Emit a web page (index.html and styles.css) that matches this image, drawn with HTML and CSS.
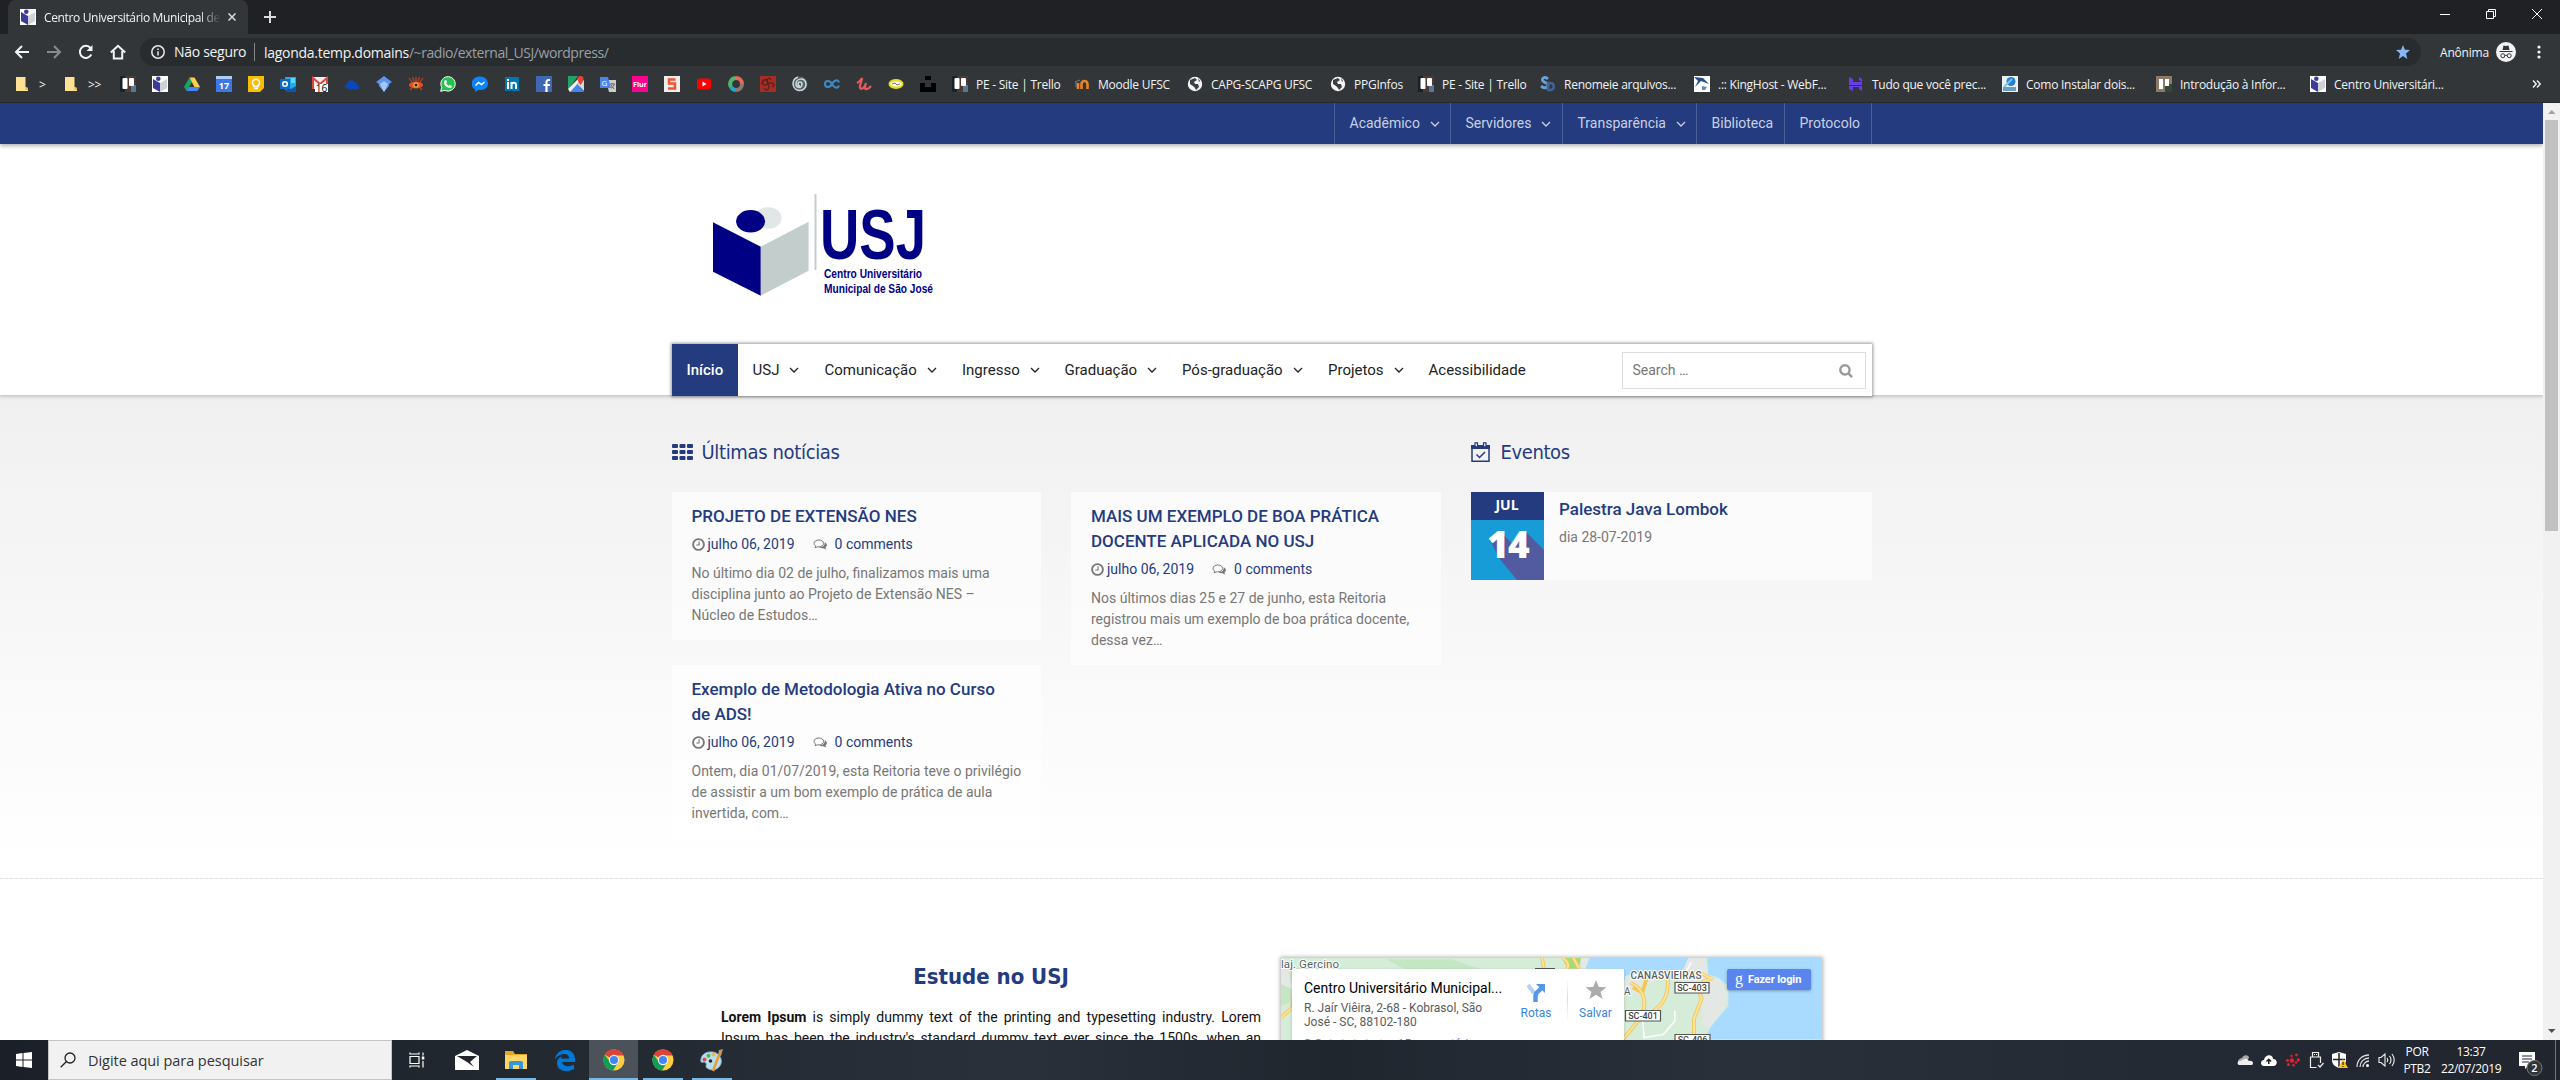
FILE: index.html
```html
<!DOCTYPE html>
<html lang="pt-BR">
<head>
<meta charset="utf-8">
<title>Centro Universitário Municipal de São José</title>
<link rel="stylesheet" href="styles.css">
</head>
<body>
<svg class="defs" width="0" height="0">
  <symbol id="usj" viewBox="0 0 16 16"><path fill="#fff" d="M0 0h16v16H0z"/><path fill="#3b3b98" d="M1 3l7 4v9l-7-4z"/><path fill="#d0d2d6" d="M15 3L8 7v9l7-4z"/><circle cx="6.300" cy="2.700" r="2.300" fill="#3b3b98"/></symbol>
  <symbol id="folder" viewBox="0 0 16 16"><path fill="#fde293" d="M2 1h9.500v10l2.500 1v3H2z"/><path fill="#e8c04f" d="M11.500 11l2.500 1v2h-2.500z"/></symbol>
  <symbol id="trello" viewBox="0 0 16 16"><path fill="#4b3a33" d="M0 0h16v16H0z"/><path fill="#17222b" d="M0 0h5v16H0z"/><path fill="#577897" d="M11 9h5v7h-5z"/><rect x="2.500" y="2" width="5" height="11" rx="1" fill="#fff"/><rect x="9" y="2" width="5" height="8" rx="1" fill="#fff"/></symbol>
  <symbol id="globe" viewBox="0 0 16 16"><circle cx="8" cy="8" r="7.200" fill="#f5f5f5"/><path fill="#3c4043" d="M3 4l5-2 2 2-3 2 1 2 3 0 1 3-3 3-1-2-2-2-3-2zM11 2l2 3-1 1z"/></symbol>
  <symbol id="chrome" viewBox="0 0 24 24"><circle cx="12" cy="12" r="11.500" fill="#ffcd40"/><path fill="#db4437" d="M12 12L2 6.300A11.500 11.500 0 0 1 22.500 7H12z"/><path fill="#0f9d58" d="M2 6.300A11.500 11.500 0 0 0 11 23.500l5.500-9L12 12 7.500 14z"/><circle cx="12" cy="12" r="5.600" fill="#f1f1f1"/><circle cx="12" cy="12" r="4.400" fill="#4285f4"/></symbol>
  <symbol id="down" viewBox="0 0 10 6"><path d="M1 1l4 4 4-4" fill="none" stroke="currentColor" stroke-width="1.300"/></symbol>
  <symbol id="clock" viewBox="0 0 12 12"><circle cx="6" cy="6" r="5" fill="none" stroke="currentColor" stroke-width="1.700"/><path d="M6.500 3v3.500H4" fill="none" stroke="currentColor"/></symbol>
  <symbol id="talk" viewBox="0 0 15 12"><path d="M5.800 1C3 1 1 2.500 1 4.400c0 1.200.8 2.100 1.800 2.700L2 8.800l2.500-1 1.300.1c2.700 0 4.800-1.500 4.800-3.500S8.500 1 5.800 1z" fill="none" stroke="currentColor"/><path d="M11.700 3.300c1.300.6 2.200 1.600 2.200 2.800 0 1-.6 1.800-1.500 2.400l1 2-3.300-1.200c-1.500.1-3-.2-4-.8 3.500 0 6-2 5.600-5.200z" fill="currentColor"/></symbol>
</svg>

<header class="browser">
  <div class="tabstrip">
    <div class="tab"><svg class="i16"><use href="#usj"/></svg><span class="tab-title">Centro Universitário Municipal de</span><svg class="tab-x" viewBox="0 0 8 8"><path d="M.5.5l7 7M7.500.5l-7 7"/></svg></div>
    <svg class="plus" viewBox="0 0 12 12"><path d="M6 0v12M0 6h12"/></svg>
    <div class="winctl">
      <svg viewBox="0 0 10 10"><path d="M0 5.500h10"/></svg>
      <svg viewBox="0 0 10 10"><path d="M.5 2.500h7v7h-7zM2.500 2.500v-2h7v7h-2"/></svg>
      <svg viewBox="0 0 10 10"><path d="M0 0l10 10M10 0L0 10"/></svg>
    </div>
  </div>
  <div class="toolbar">
    <svg class="nav" viewBox="0 0 16 16"><path d="M15 8H2M8 2L2 8l6 6"/></svg>
    <svg class="nav dim" viewBox="0 0 16 16"><path d="M1 8h13M8 2l6 6-6 6"/></svg>
    <svg class="nav" viewBox="0 0 16 16"><path d="M13.300 10.500A6 6 0 1 1 12.500 4"/><path d="M14.500 1v6h-6z" fill="#f1f3f4" stroke="none"/></svg>
    <svg class="nav" viewBox="0 0 16 16"><path d="M.8 8.500L8 1.800l7.200 6.700M3.800 7v7.500h8.400V7"/></svg>
    <div class="omni">
      <svg class="info" viewBox="0 0 14 14"><circle cx="7" cy="7" r="6.200"/><path d="M7 6.200v4.300M7 3.500v1.500"/></svg>
      <span class="insecure">Não seguro</span><span class="url"><b>lagonda.temp.domains</b><i>/~radio/external_USJ/wordpress/</i></span>
      <svg class="star" viewBox="0 0 14 14"><path fill="#8ab4f8" d="M7 0l1.900 4.800 5.100.3-4 3.300L11.300 14 7 10.900 2.700 14 4 8.400 0 5.100l5.100-.3z"/></svg>
    </div>
    <span class="anon">Anônima</span>
    <svg class="avatar" viewBox="0 0 20 20"><circle cx="10" cy="10" r="10" fill="#f1f3f4"/><g fill="#323639"><path d="M6.500 8l1-4.500 2.500.6 2.500-.6 1 4.500z"/><path d="M3.500 9h13v1h-13z"/></g><g fill="none" stroke="#323639"><circle cx="6.800" cy="13.700" r="2"/><circle cx="13.200" cy="13.700" r="2"/><path d="M8.800 13.400h2.400"/></g></svg>
    <svg class="dots" viewBox="0 0 4 14"><g fill="#f1f3f4"><circle cx="2" cy="2" r="1.600"/><circle cx="2" cy="7" r="1.600"/><circle cx="2" cy="12" r="1.600"/></g></svg>
  </div>
  <div class="marks">
    <a class="dir" style="width:33px"><svg class="i16"><use href="#folder"/></svg>&gt;</a>
    <a class="dir" style="width:41px"><svg class="i16"><use href="#folder"/></svg>&gt;&gt;</a>
    <svg class="i16"><use href="#trello"/></svg>
    <svg class="i16"><use href="#usj"/></svg>
    <svg class="i16" viewBox="0 0 16 16"><path fill="#1aa260" d="M5.500 1.500L0 11l2.700 4L8 6z"/><path fill="#ffcf48" d="M5.500 1.500h5L16 11h-5.500z"/><path fill="#4688f4" d="M5 11h11l-2.700 4H2.700z"/></svg>
    <svg class="i16" viewBox="0 0 16 16"><path fill="#3c78e6" d="M0 1h16v15H0z"/><path fill="#aecbfa" d="M0 0h16v3H0z"/><text x="8" y="12.500" font-size="9" font-weight="700" text-anchor="middle" fill="#fff">17</text></svg>
    <svg class="i16" viewBox="0 0 16 16"><path fill="#fbbc04" d="M0 0h16v12l-4 4H0z"/><path d="M6 9.500a3.500 3.500 0 1 1 4 0v1H6zM6 12.500h4" fill="none" stroke="#fff" stroke-width="1.500"/></svg>
    <svg class="i16" viewBox="0 0 16 16"><path fill="#28a8ea" d="M5 1h11v13H5z"/><path fill="#50d9ff" d="M11 2h4v5h-4z"/><path fill="#0a57ad" d="M6 10l5 3 5-3v6H6z"/><path fill="#0f6cbd" d="M0 3h10v10H0z"/><circle cx="5" cy="8" r="2.300" fill="none" stroke="#fff" stroke-width="1.500"/></svg>
    <svg class="i16" viewBox="0 0 16 16"><path fill="#eee" d="M0 1h16v12H0z"/><path d="M1 13V2l7 6 7-6v11" fill="none" stroke="#e0443a" stroke-width="2"/><path fill="#fff" d="M3 8h13v8H3z"/><text x="9.500" y="15.500" font-size="10" text-anchor="middle" fill="#000">16</text></svg>
    <svg class="i16" viewBox="0 0 16 16"><path fill="#0b47b5" d="M3 12c-3 0-3-4 0-4 0-4 6-5 7-2 2-.5 3.500 1 3 2.500 3 1 3 5 0 5H5z"/></svg>
    <svg class="i16" viewBox="0 0 16 16"><path fill="#5c95ee" d="M8 0l8 6-3 2v2L8 16l-5-6V8L0 6z"/><path fill="#a9c8fa" d="M4 8l4-3 4 3-4 8z"/></svg>
    <svg class="i16" viewBox="0 0 16 16"><path d="M1 2l3 4M4.500 1l1.500 4M8 1v5M11.500 1L10 5M15 2l-3 4M2 14l2-2M14 14l-2-2" stroke="#c8401f" stroke-width="1.200"/><ellipse cx="8" cy="9" rx="7" ry="3.500" fill="#e25321"/><circle cx="8" cy="9" r="2.600" fill="#ffba3b"/><circle cx="8" cy="9" r="1.500" fill="#222"/></svg>
    <svg class="i16" viewBox="0 0 16 16"><path fill="#25c34c" stroke="#fff" d="M.7 15.300l1-4A7.200 7.200 0 1 1 5 14.400z"/><path fill="#fff" d="M5 4l1.500.5.500 2-1 1 2.500 2.300 1.200-.8 2.200 1c0 4-8.400 1-8-4z"/></svg>
    <svg class="i16" viewBox="0 0 16 16"><path fill="#0a84ff" d="M8 .5C-2 .5-2 12 3 13v3l3-2c14 1 12-13.500 2-13.500z"/><path d="M3.500 9.500l3-3 3 2 3-2.500" fill="none" stroke="#fff" stroke-width="1.500"/></svg>
    <svg class="i16" viewBox="0 0 16 16"><path fill="#0077b5" d="M1 1h14v14H1z"/><path fill="none" stroke="#fff" stroke-width="2" d="M4 6v7M4 3v2M7.500 13V6M7.500 9c0-3 4.500-3 4.500 0v4"/></svg>
    <svg class="i16" viewBox="0 0 16 16"><path fill="#4267b2" d="M0 0h16v16H0z"/><path fill="none" stroke="#fff" stroke-width="2.200" d="M14 4h-1.500c-2 0-2 1-2 2.500V16M7.500 9H14"/></svg>
    <svg class="i16" viewBox="0 0 16 16"><path fill="#1fa463" d="M0 0h10L0 14z"/><path fill="#4285f4" d="M1 16l8-8 7 8z"/><path fill="#eee" d="M0 13L12 1l2 2L2 16z"/><path fill="#d3dbe4" d="M9 8l7-4v11z"/><path fill="#ea4335" d="M12.500 0c4 0 4 4 0 9-4-5-4-9 0-9z"/></svg>
    <svg class="i16" viewBox="0 0 16 16"><path fill="#ccc" d="M6 4h10v12H9z"/><path fill="#4a86e8" d="M0 1h8l3 11H0z"/><text x="1.500" y="9.500" font-size="8" fill="#fff">G</text><path d="M10 8h5M12 7v1M14 8c0 2-2 4-3 4M11 9l3 4" stroke="#666" fill="none"/></svg>
    <svg class="i16" viewBox="0 0 16 16"><path fill="#ff0090" d="M0 0h16v16H0z"/><text x="8" y="10.500" font-size="7" font-weight="700" text-anchor="middle" fill="#fff">Flur</text></svg>
    <svg class="i16" viewBox="0 0 16 16"><path fill="#eee" d="M0 0h16v16H0z"/><path d="M11.500 3.500H5v4h6v5H4" fill="none" stroke="#f0562c" stroke-width="2.500"/></svg>
    <svg class="i16" viewBox="0 0 16 16"><rect x="1" y="2.500" width="14" height="11" rx="2.500" fill="red"/><path fill="#fff" d="M6.500 5.500v5l4-2.500z"/></svg>
    <svg class="i16" viewBox="0 0 16 16"><g fill="none" stroke-width="4"><path stroke="#e56a5a" d="M8 2a6 6 0 0 1 6 6"/><path stroke="#8f7774" d="M14 8a6 6 0 0 1-6 6"/><path stroke="#22a7c4" d="M8 14a6 6 0 0 1-5-3"/><path stroke="#55b46b" d="M3 11a6 6 0 0 1 5-9"/></g></svg>
    <svg class="i16" viewBox="0 0 16 16"><path fill="#a82c24" d="M0 0h16v16H0z"/><path d="M8 8C5 4 9 0 11 4M8 8c5-3 8 1 4 3M8 8c3 5-2 8-4 4M8 8C3 11 0 6 4 4M8 8C8 2 2 3 3 7" fill="none" stroke="#54201c" stroke-width="1.300"/></svg>
    <svg class="i16" viewBox="0 0 16 16"><circle cx="8" cy="8" r="7.500" fill="#56646a"/><path d="M8 10a2 2 0 1 1 2-2c0 5-6 4-6 0 0-6 9-7 10 0 0 8-12 9-13 0 0-3 2-6 5-7" fill="none" stroke="#cfdadd" stroke-width="1.500"/></svg>
    <svg class="i16" viewBox="0 0 16 16"><path d="M8 8C6 4 1 4 1 8s5 4 7 0 6-5 7-1.500M8 8c2 4 6 5 7 1.500" fill="none" stroke="#3c8ccb" stroke-width="2"/></svg>
    <svg class="i16" viewBox="0 0 16 16"><path d="M1 7c3-1 5-6 5-4L4 10c-1 4 4 4 6-3l-1 4c-.5 3 3 3 6-1" fill="none" stroke="#e45a5e" stroke-width="2.200"/></svg>
    <svg class="i16" viewBox="0 0 16 16"><ellipse cx="8" cy="8" rx="7.500" ry="5" fill="#e9dc21"/><ellipse cx="8" cy="8" rx="5.500" ry="2.500" fill="#fff"/><path d="M4 8l3-1 2 2 3-1" stroke="#777" fill="none"/></svg>
    <svg class="i16" viewBox="0 0 16 16"><path d="M5 0h6v4H5zM0 7h5v4h6V7h5v9H0z"/></svg>
    <a style="width:106px"><svg class="i16"><use href="#trello"/></svg>PE - Site | Trello</a>
    <a style="width:97px"><svg class="i16" viewBox="0 0 16 16"><path d="M1 6l5-2M2 6v5" stroke="#777" fill="none"/><path d="M4 13V7M7.500 13V8c0-4 6-4 6 0v5" fill="none" stroke="#e88626" stroke-width="2.600"/></svg>Moodle UFSC</a>
    <a style="width:127px"><svg class="i16"><use href="#globe"/></svg>CAPG-SCAPG UFSC</a>
    <a style="width:72px"><svg class="i16"><use href="#globe"/></svg>PPGInfos</a>
    <a style="width:106px"><svg class="i16"><use href="#trello"/></svg>PE - Site | Trello</a>
    <a style="width:138px"><svg class="i16" viewBox="0 0 16 16"><path d="M8 3C5 0 1 2 3 5s5 1 5 4-4 4-7 1" fill="none" stroke="#6aa0d0" stroke-width="3"/><path d="M8 7h2c5 0 5 7 0 7H8z" fill="none" stroke="#3f6399" stroke-width="2.500"/></svg>Renomeie arquivos...</a>
    <a style="width:138px"><svg class="i16" viewBox="0 0 16 16"><path fill="#fff" d="M0 0h16v16H0z"/><path fill="#264f86" d="M0 1l9 1 6 6-8-3-6 6 3-6z"/><path fill="#6389b8" d="M8 10l5 1-2 3H8z"/></svg>.:: KingHost - WebF...</a>
    <a style="width:138px"><svg class="i16" viewBox="0 0 16 16"><path fill="#673de6" d="M1 1l4 2v3h9v3H1zM11 1l3 2v3l-3-2zM1 10h13v5l-3-2v-2H5v4l-4-2z"/></svg>Tudo que você prec...</a>
    <a style="width:138px"><svg class="i16" viewBox="0 0 16 16"><path fill="#e9f0f4" d="M0 0h16v16H0z"/><circle cx="9" cy="5.500" r="4.500" fill="#247fd0"/><path d="M2 11l8-8" stroke="#78c5f0" stroke-width="2"/><path fill="#6f9dbd" d="M1 11h13v4H1z"/></svg>Como Instalar dois...</a>
    <a style="width:138px"><svg class="i16" viewBox="0 0 16 16"><path fill="#8b7b66" d="M0 0h16v16H0z"/><path fill="#35483a" d="M9 8h7v8H9z"/><path fill="#fff" d="M3 3h4v10H3zM9 3h4v7H9z"/></svg>Introdução à Infor...</a>
    <a style="width:138px"><svg class="i16"><use href="#usj"/></svg>Centro Universitári...</a>
    <svg class="more" viewBox="0 0 9 8"><path d="M1 .5L4.200 4 1 7.500M5 .5L8.200 4 5 7.500"/></svg>
  </div>
</header>

<div class="viewport">
<main class="page">
  <div class="topbar"><nav class="wrap">
    <a style="width:116px">Acadêmico <svg class="chev"><use href="#down"/></svg></a><a style="width:112px">Servidores <svg class="chev"><use href="#down"/></svg></a><a style="width:134px">Transparência <svg class="chev"><use href="#down"/></svg></a><a style="width:88px">Biblioteca</a><a class="last" style="width:88px">Protocolo</a>
  </nav></div>
  <div class="masthead"><div class="wrap">
    <svg class="logo" width="230" height="110" viewBox="710 190 230 110" role="img" aria-label="USJ">
      <ellipse cx="768" cy="218" rx="13.500" ry="10.800" fill="#e1e7e6"/><ellipse cx="750.600" cy="221.300" rx="14.500" ry="11.200" fill="#000084"/>
      <path fill="#000084" d="M713 222.300l47.800 24.400v49L713 271.700z"/><path fill="#c3cecc" d="M808.600 221.700l-47.800 25v49l47.800-25z"/><path fill="#c3cecc" d="M814.500 194h2v76h-2z"/>
      <g fill="#000084" font-family="Liberation Sans, Arial, sans-serif" font-weight="700"><text x="820" y="259" font-size="70" textLength="106" lengthAdjust="spacingAndGlyphs">USJ</text><text x="824" y="278" font-size="13" textLength="98" lengthAdjust="spacingAndGlyphs">Centro Universitário</text><text x="824" y="292.700" font-size="13" textLength="109" lengthAdjust="spacingAndGlyphs">Municipal de São José</text></g>
    </svg>
    <nav class="menu">
      <a class="on" style="width:66px">Início</a><a style="width:72px">USJ <svg class="chev"><use href="#down"/></svg></a><a style="width:137.500px">Comunicação <svg class="chev"><use href="#down"/></svg></a><a style="width:102.500px">Ingresso <svg class="chev"><use href="#down"/></svg></a><a style="width:117.500px">Graduação <svg class="chev"><use href="#down"/></svg></a><a style="width:146px">Pós-graduação <svg class="chev"><use href="#down"/></svg></a><a style="width:100.500px">Projetos <svg class="chev"><use href="#down"/></svg></a><a>Acessibilidade</a>
      <div class="search">Search …<svg viewBox="0 0 13 13"><circle cx="5.500" cy="5.500" r="4.300"/><path d="M8.700 8.700l3.500 3.500"/></svg></div>
    </nav>
  </div></div>

  <section class="feed"><div class="wrap cols">
    <div class="news">
      <h2><svg width="21" height="16" viewBox="0 0 21 16"><path d="M0 1q0-1 1-1h4q1 0 1 1v2q0 1-1 1H1q-1 0-1-1zm7.500 0q0-1 1-1h4q1 0 1 1v2q0 1-1 1h-4q-1 0-1-1zM15 1q0-1 1-1h4q1 0 1 1v2q0 1-1 1h-4q-1 0-1-1zM0 7q0-1 1-1h4q1 0 1 1v2q0 1-1 1H1q-1 0-1-1zm7.500 0q0-1 1-1h4q1 0 1 1v2q0 1-1 1h-4q-1 0-1-1zM15 7q0-1 1-1h4q1 0 1 1v2q0 1-1 1h-4q-1 0-1-1zM0 13q0-1 1-1h4q1 0 1 1v2q0 1-1 1H1q-1 0-1-1zm7.500 0q0-1 1-1h4q1 0 1 1v2q0 1-1 1h-4q-1 0-1-1zM15 13q0-1 1-1h4q1 0 1 1v2q0 1-1 1h-4q-1 0-1-1z" fill="currentColor"/></svg>Últimas notícias</h2>
      <div class="grid">
        <div class="stack">
          <article><h3>PROJETO DE EXTENSÃO NES</h3><div class="meta"><svg class="clock"><use href="#clock"/></svg><span>julho 06, 2019</span><svg class="talk"><use href="#talk"/></svg><span>0 comments</span></div><p>No último dia 02 de julho, finalizamos mais uma<br>disciplina junto ao Projeto de Extensão NES –<br>Núcleo de Estudos…</p></article>
          <article><h3>Exemplo de Metodologia Ativa no Curso<br>de ADS!</h3><div class="meta"><svg class="clock"><use href="#clock"/></svg><span>julho 06, 2019</span><svg class="talk"><use href="#talk"/></svg><span>0 comments</span></div><p>Ontem, dia 01/07/2019, esta Reitoria teve o privilégio<br>de assistir a um bom exemplo de prática de aula<br>invertida, com…</p></article>
        </div>
        <div class="stack">
          <article><h3>MAIS UM EXEMPLO DE BOA PRÁTICA<br>DOCENTE APLICADA NO USJ</h3><div class="meta"><svg class="clock"><use href="#clock"/></svg><span>julho 06, 2019</span><svg class="talk"><use href="#talk"/></svg><span>0 comments</span></div><p>Nos últimos dias 25 e 27 de junho, esta Reitoria<br>registrou mais um exemplo de boa prática docente,<br>dessa vez…</p></article>
        </div>
      </div>
    </div>
    <div class="events">
      <h2><svg width="19" height="20" viewBox="0 0 19 20"><path d="M1 4h17v15.200H1z" fill="none" stroke="currentColor" stroke-width="1.500"/><path d="M0 3h19v4H0z" fill="currentColor"/><path d="M4 .8h2.500v4H4zM12.500.8H15v4h-2.500z" fill="#f3f3f3" stroke="currentColor" stroke-width="1.200"/><path d="M5.500 12.500l3 3 5.500-5.500" fill="none" stroke="currentColor" stroke-width="1.500"/></svg>Eventos</h2>
      <div class="event">
        <div class="date"><div class="month">JUL</div><div class="day"><svg width="73" height="60" viewBox="0 0 73 60"><path fill="#525aa0" d="M19 20l9 18 18 22h27V30L56 13 42 25 31 13z"/></svg><b>14</b></div></div>
        <div><h3>Palestra Java Lombok</h3><p>dia 28-07-2019</p></div>
      </div>
    </div>
  </div></section>

  <section class="about"><div class="inner">
    <div class="study"><h2>Estude no USJ</h2><p><b>Lorem Ipsum</b> is simply dummy text of the printing and typesetting industry. Lorem Ipsum has been the industry's standard dummy text ever since the 1500s, when an unknown printer took a galley of type and scrambled it to make a type specimen book.</p></div>
    <div class="map">
      <svg class="tiles" width="541" height="82" viewBox="0 0 541 82">
        <path fill="#d5edd8" d="M0 0h541v82H0z"/>
        <g transform="translate(-21.430 -18.670) scale(.3827 .3333)">
          <path fill="#c5e6c2" d="M56 95l120-25 80 40-200 90zM330 60l170 0 80 30H380z"/>
          <path fill="#a9daff" d="M862 56L835 88h115v34c40 12 54-2 68-25l75 5c20-12 24-30 32-46z"/>
          <path fill="#a9daff" d="M1170 56h301v244H1163l17-40 45-60 0-60-25-25-28-10z"/>
          <path fill="#e3e8e4" d="M1120 56l45 0 8 50 27 15 22 30-5 50-40 65-20-10 0-100-40-10-20-30zM955 110l60-15 22 25-50 45-35-10zM830 60l32-4-10 32h-20zM56 90h20l10 60-30-15z"/>
          <path fill="#a6dc78" d="M790 56h50l-5 32h-30z"/>
          <g fill="none" stroke="#f1c75b" stroke-width="10"><path d="M738 56l5 32M792 56q20 15 12 32M820 56l15 32M56 235l35-35M90 150l-5 60"/><path d="M970 130q50 30 30 100l-50 70M975 145l25 15 15-55M1000 230q55-20 65-75l5-55 80 0 35 20M1185 118q-50 5-30 60l-20 60v62M1085 130l90 25"/></g>
          <g fill="none" stroke="#ffe398" stroke-width="5"><path d="M738 56l5 32M792 56q20 15 12 32M820 56l15 32M56 235l35-35"/><path d="M970 130q50 30 30 100l-50 70M1000 230q55-20 65-75l5-55 80 0 35 20M1185 118q-50 5-30 60l-20 60v62"/></g>
          <path d="M1128 70l-15 30-60 0M1000 230l5 65 50-10 30-40v-30" fill="none" stroke="#fff" stroke-width="4"/>
        </g>
        <path d="M254 10.500h20" stroke="#555" stroke-width="1"/>
        <g font-size="11" fill="#585f66" stroke="#fff" stroke-width="2" paint-order="stroke"><text x="0" y="9.500" font-size="11.500" textLength="58">laj. Gercino</text><text x="349.500" y="21" font-weight="500" font-size="10" textLength="71">CANASVIEIRAS</text><text x="343" y="36.500" font-size="10">A</text></g>
        <g fill="#fff" stroke="#555" stroke-width="1.200"><path d="M394 24.500h34v10.500h-34zM344.500 52.500h35v10.500h-35zM394 76.500h35v10.500h-35z"/></g>
        <g font-size="9" font-weight="500" fill="#444" text-anchor="middle"><text x="411" y="33">SC-403</text><text x="362" y="61">SC-401</text><text x="411.500" y="85">SC-406</text></g>
      </svg>
      <div class="place">
        <div class="place-text"><strong>Centro Universitário Municipal...</strong><span>R. Jaír Viêira, 2-68 - Kobrasol, São<br>José - SC, 88102-180</span><em><b>3,8</b> ★★★★<i>★</i> <u>15 comentários</u></em></div>
        <div class="act"><svg width="18" height="19" viewBox="0 0 18 19"><path d="M1 2l6 8" stroke="#b3d0f8" stroke-width="4"/><path d="M8.500 19v-6q0-3 3-5l3-3" fill="none" stroke="#5596e8" stroke-width="4.500"/><path d="M9 1h9v9z" fill="#5596e8"/></svg>Rotas</div>
        <div class="act save"><svg width="22" height="20" viewBox="0 0 22 20"><path fill="#ababab" d="M11 0l3 7.300 8 .2-6.300 5L18 20l-7-4.600L4 20l2.300-7.500L0 7.500l8-.2z"/></svg>Salvar</div>
      </div>
      <div class="login"><span>g</span>Fazer login</div>
    </div>
  </div></section>
</main>
<div class="scroll"><svg width="17" height="17" viewBox="0 0 17 17"><path fill="#a3a3a3" d="M5 11h7.500L8.700 7z"/></svg><div class="thumb"></div><svg class="end" width="17" height="17" viewBox="0 0 17 17"><path fill="#505050" d="M5 6h7.500L8.700 10z"/></svg></div>
</div>

<footer class="taskbar">
  <div class="cell start"><svg width="16" height="16" viewBox="0 0 16 16"><path fill="#fff" d="M0 2l6.500-1v6.500H0zM7.500.9L16 0v7.500H7.500zM0 8.500h6.500V15L0 14zM7.500 8.500H16V16l-8.500-1z"/></svg></div>
  <div class="find"><svg width="16" height="16" viewBox="0 0 16 16"><circle cx="10" cy="6" r="5"/><path d="M6.500 9.500L.7 15.300"/></svg>Digite aqui para pesquisar</div>
  <div class="cell"><svg width="16" height="16" viewBox="0 0 16 16"><g fill="none" stroke="#fff" stroke-width="1.200"><path d="M1 4.500h9v7H1zM1 .5V2h9V.5M1 15.500V14h9v1.500M14 .5v3M14 9v6.500"/></g><path fill="#fff" d="M12.800 4.500h2.500v3h-2.500z"/></svg></div>
  <div class="cell"><svg width="24" height="20" viewBox="0 0 24 20"><path fill="#fff" d="M0 6l12-6 12 6v14H0z"/><path fill="#20252c" d="M2 6h20l-7 6 4 5-7-5z"/></svg></div>
  <div class="cell run"><svg width="22" height="20" viewBox="0 0 22 20"><path fill="#e9a51b" d="M0 1h8l2 3h12v3H0z"/><path fill="#ffd766" d="M0 5h22v14H0z"/><path fill="#3796db" d="M4 19v-6q0-2 2-2h10q2 0 2 2v6h-4v-4H8v4z"/></svg></div>
  <div class="cell"><svg width="20" height="21" viewBox="0 0 20 21"><path fill="#0078d7" d="M0 9.500C1-3 20-3.500 20 9v3H7c1 5 8 5 12 2.500V19C13 22.500 2 22 2 13c0-4 3-6 5-7-1 1-1 2-1 2.500h8C14 2 4 3 0 9.500z"/></svg></div>
  <div class="cell run on"><svg width="22" height="22"><use href="#chrome"/></svg></div>
  <div class="cell run"><svg width="22" height="22"><use href="#chrome"/></svg></div>
  <div class="cell run"><svg width="24" height="23" viewBox="0 0 24 23"><path fill="#b9e0ef" stroke="#7fb6cf" d="M12 3C4 2 0 8 1 13c1 1 4-1 5 1s-1 4 1 5c7 5 16-1 14-9-1-4-5-7-9-7z"/><circle cx="4.500" cy="10.500" r="2" fill="#e34b3c"/><circle cx="8.500" cy="6.800" r="2" fill="#57b54a"/><circle cx="13.500" cy="5.500" r="2" fill="#f0b83f"/><circle cx="10.500" cy="12" r="1.800" fill="#1f252d"/><path d="M13 22l6-16" stroke="#ee9933" stroke-width="2.500"/><path fill="#c99563" d="M18 6l1-5 4-1-2 7z"/></svg></div>
  <div class="tray">
    <svg width="16" height="10" viewBox="0 0 16 10"><path fill="#aaa" d="M1 7C1 4 4 3 5 3c2-4 7-3 7 0l-3 4z"/><path fill="#eee" d="M2 10c-2-1-2-4 1-4 3 0 4-3 7-2l2 2c4-1 5 3 3 4z"/></svg>
    <svg width="16" height="11" viewBox="0 0 16 11"><path fill="#fff" d="M3 11c-4 0-4-6 0-6 1-6 9-6 9-1 5 0 5 7 0 7z"/><path d="M7.800 9V4.500M5.500 6.500l2.300-2.300 2.300 2.300" stroke="#222" fill="none" stroke-width="1.500"/></svg>
    <svg width="16" height="14" viewBox="0 0 16 14"><g fill="#e3232b"><circle cx="2.500" cy="7.500" r="1.600"/><circle cx="7" cy="7.500" r="2.200"/><circle cx="6.500" cy="3" r="1.200"/><circle cx="11.500" cy="2" r="1.400"/><circle cx="13.300" cy="7" r="1.700"/><circle cx="3.500" cy="11.500" r="1.500"/><circle cx="8.500" cy="12.300" r="1.300"/><circle cx="11" cy="9.500" r="1.300"/></g></svg>
    <svg width="15" height="18" viewBox="0 0 15 18"><path d="M3.500 6V1.500h6V6M1.500 17V6h10v6M1.500 16.500h6M9 14l2 2 3.500-4M5 3.500h1M7 3.500h1" fill="none" stroke="#eee" stroke-width="1.200"/></svg>
    <svg width="16" height="17" viewBox="0 0 16 17"><path fill="#fff" d="M7 0l7 2v6c0 5-4 7-7 8-3-1-7-3-7-8V2z"/><path d="M7 1v14M1 7.500h12" stroke="#222" stroke-width="1.500"/><path fill="#fcc419" d="M11 7l5 9H6z"/><path d="M11 10v3M11 14v1" stroke="#222" stroke-width="1.200"/></svg>
    <svg width="14" height="13" viewBox="0 0 14 13"><g fill="none" stroke="#ddd" stroke-width="1.300"><path d="M1 13C1 6 6 1 13 1M4 13c0-5 4-9 9-9M7 13c0-3 3-6 6-6"/></g><circle cx="11.500" cy="11.500" r="1.500" fill="#fff"/></svg>
    <svg width="17" height="14" viewBox="0 0 17 14"><g fill="none" stroke="#eee" stroke-width="1.100"><path d="M1 4.500h2l4-3.500v12L3 9.500H1zM9 5q1.500 2 0 4M11.500 3q3 4 0 8M14 1q4.500 6 0 12"/></g></svg>
    <div class="two lang">POR<br>PTB2</div><div class="two time">13:37<br>22/07/2019</div>
    <svg class="note" width="26" height="26" viewBox="0 0 26 26"><path fill="#fff" d="M1 0h16v14h-7l-3 3v-3H1z"/><path d="M4 4h10M4 7h10M4 10h7" stroke="#20252c" stroke-width="1.200"/><circle cx="16.500" cy="16" r="7.500" fill="#30343b" stroke="#777"/><text x="16.500" y="20" font-size="11" font-weight="600" text-anchor="middle" fill="#fff">2</text></svg>
  </div>
</footer>
</body>
</html>
```
FILE: styles.css
```css
* { box-sizing: border-box; }
body { margin: 0; width: 2560px; height: 1080px; overflow: hidden; display: flex; flex-direction: column; background: #fff; font: 14px/21px Roboto, sans-serif; }
svg { flex: none; display: block; }
.defs { display: none; }
h2, h3, p { margin: 0; }
.i16 { width: 16px; height: 16px; }

/* browser chrome */
.browser { height: 103px; background: #323639; color: #f1f3f4; font-family: "Open Sans", "Noto Sans", sans-serif; font-size: 12px; border-bottom: 1px solid #27292b; }
.tabstrip { height: 34px; background: #202124; display: flex; align-items: center; padding-left: 8px; }
.tab { width: 240px; height: 34px; background: #323639; border-radius: 8px 8px 0 0; display: flex; align-items: center; padding-left: 12px; }
.tab-title { width: 177px; margin: 0 7px 0 8px; overflow: hidden; white-space: nowrap; letter-spacing: -.35px; -webkit-mask-image: linear-gradient(90deg, #000 88%, transparent); mask-image: linear-gradient(90deg, #000 88%, transparent); }
.tab-x, .plus { width: 8px; height: 8px; stroke: #dadce0; stroke-width: 1.500; fill: none; }
.plus { width: 12px; height: 12px; margin-left: 16px; stroke-width: 2; }
.winctl { margin: -6px 18px 0 auto; display: flex; gap: 36px; }
.winctl svg { width: 10px; height: 10px; fill: none; stroke: #fff; }
.toolbar { height: 32px; display: flex; align-items: center; padding: 4px 19px 0 14px; }
.nav { width: 16px; height: 16px; margin-right: 16px; fill: none; stroke: #f1f3f4; stroke-width: 2; }
.dim { opacity: .45; }
.omni { width: 2281px; height: 28px; margin-left: -2px; border-radius: 14px; background: #282c2f; display: flex; align-items: center; padding: 0 11px; font-size: 14px; }
.info { width: 14px; height: 14px; fill: none; stroke: #e8eaed; stroke-width: 1.500; }
.insecure { width: 81px; margin-left: 9px; border-right: 1px solid #85888b; line-height: 18px; letter-spacing: -.3px; }
.url { margin-left: 9px; letter-spacing: -.28px; }
.url b { font-weight: 400; }
.url i { font-style: normal; color: #9aa0a6; letter-spacing: -.44px; }
.star { width: 14px; height: 14px; margin-left: auto; }
.anon { width: 48px; margin-left: 19px; letter-spacing: -.2px; }
.avatar { width: 20px; height: 20px; margin-left: 8px; }
.dots { width: 4px; height: 14px; margin-left: auto; }
.marks { height: 36px; display: flex; align-items: center; gap: 16px; padding: 0 19px 0 14px; }
.marks > * { flex: none; }
.marks a { display: flex; align-items: center; gap: 8px; white-space: nowrap; letter-spacing: -.25px; }
.marks .dir { gap: 9px; }
.marks .more { width: 9px; height: 8px; margin-left: auto; fill: none; stroke: #eee; stroke-width: 1.500; }

/* page */
.viewport { height: 937px; display: flex; overflow: hidden; }
.page { width: 2543px; height: 937px; overflow: hidden; }
.wrap { width: 1200px; margin: 0 auto; }
.topbar { height: 41px; background: #243b7f; box-shadow: 0 2px 4px rgba(0,0,0,.3); position: relative; }
.topbar .wrap { display: flex; justify-content: flex-end; height: 41px; }
.topbar a { border-left: 1px solid #4c5f98; padding-left: 15px; line-height: 41px; color: #c9d0e3; display: flex; align-items: center; }
.topbar .last { border-right: 1px solid #4c5f98; }
.chev { width: 10px; height: 6px; margin-left: 10px; }
.masthead { height: 251px; background: #fff; box-shadow: 0 0 4px 1px rgba(0,0,0,.25); position: relative; z-index: 1; margin-top: 0; clip-path: inset(0 0 -8px 0); }
.topbar { z-index: 2; }
.logo { margin-left: 38px; position: relative; top: 46px; }
.menu { height: 52px; margin-top: 90px; display: flex; background: #fff; box-shadow: 0 0 3px 1px rgba(0,0,0,.4); position: relative; font-size: 15px; color: #222; }
.menu a { padding-left: 15px; display: flex; align-items: center; }
.menu .on { background: #243b7f; color: #fff; font-weight: 500; }
.search { width: 244px; height: 37px; margin: 8px 6px 0 auto; border: 1px solid #ddd; display: flex; align-items: center; justify-content: space-between; padding: 0 12px 0 10px; font-size: 14px; color: #777; }
.search svg { width: 14px; height: 14px; fill: none; stroke: #999; stroke-width: 2.200; }
.feed { height: 484px; background: linear-gradient(#f0f0f0, #fff 97%); border-bottom: 1px dashed #e2e2e2; }
.cols { display: flex; gap: 30px; padding-top: 41px; color: #243b7f; }
.news { width: 769px; }
.feed h2 { height: 32px; margin-bottom: 24px; display: flex; align-items: center; gap: 9px; font: 400 20px/32px "DejaVu Sans Condensed", "DejaVu Sans", sans-serif; font-stretch: condensed; letter-spacing: -.35px; }
.grid { display: flex; gap: 30px; }
.stack { width: 369.500px; display: flex; flex-direction: column; gap: 25px; }
article { background: rgba(255,255,255,.6); padding: 12px 0 14px 20px; white-space: nowrap; }
h3 { font-size: 17px; line-height: 25px; font-weight: 500; color: #243b7f; }
.meta { height: 21px; margin: 5px 0 8px; display: flex; align-items: center; }
.meta svg { color: #777; }
.clock { width: 13px; height: 13px; margin: -1px 3px 0 0; }
.talk { width: 15px; height: 12px; margin: 0 7px 0 18px; }
.feed p { color: #777; }
.events { width: 401px; }
.events h2 { gap: 11px; letter-spacing: -.4px; }
.event { height: 88px; background: rgba(255,255,255,.6); display: flex; gap: 15.500px; }
.event h3 { margin: 5px 0; }
.date { width: 73px; text-align: center; color: #fff; font-family: "Open Sans", sans-serif; font-weight: 700; }
.month { height: 28px; line-height: 26px; background: #243b7f; font-size: 14px; }
.day { height: 60px; background: #189cd8; display: grid; }
.day > * { grid-area: 1 / 1; }
.day b { font-size: 37px; line-height: 48px; z-index: 1; letter-spacing: -1px; padding-left: 2px; }
.inner { width: 1101px; margin: 79px auto 0; display: flex; justify-content: space-between; }
.study { width: 540px; margin-top: 3px; color: #111; }
.study h2 { color: #243b7f; text-align: center; font: 700 22px/32px "DejaVu Sans Condensed", "DejaVu Sans", sans-serif; font-stretch: condensed; letter-spacing: 0; }
.study p { margin-top: 14px; text-align: justify; }
.map { width: 541px; height: 300px; display: grid; grid-template-columns: 332px 1fr auto; padding: 11px 11px 0; background: #d5edd8; box-shadow: 0 0 4px 1px rgba(0,0,0,.3); position: relative; }
.tiles { position: absolute; left: 0; top: 0; }
.place { position: relative; height: 100px; background: #fff; padding-left: 12px; display: flex; box-shadow: 0 1px 3px rgba(0,0,0,.2); }
.place-text { width: 206px; font-size: 12px; line-height: 14px; color: #5b5b5b; white-space: nowrap; }
.place-text strong { display: block; margin: 11px 0 5px; font-size: 14px; line-height: 16px; font-weight: 400; color: #000; }
.place-text em { display: block; margin-top: 8px; font-style: normal; color: #e7711b; font-size: 13px; }
.place-text em i { color: #ccc; }
.place-text em u { margin-left: 9px; text-decoration: none; color: #3a84df; font-size: 12px; }
.act { width: 52px; padding-top: 14px; display: flex; flex-direction: column; align-items: center; gap: 4px; font-size: 12px; line-height: 14px; color: #3a84df; }
.act svg { height: 19px; }
.save { width: 56px; padding-top: 11px; gap: 7px; border-left: 1px solid; border-image: linear-gradient(#fff 10%, #ddd 30%, #fff 55%) 1; margin-left: 5px; }
.login { position: relative; grid-column: 3; width: 84px; height: 21px; background: #5b85ee; border-radius: 2px; color: #fff; font-size: 11px; font-weight: 700; line-height: 21px; padding-left: 8px; display: flex; gap: 5px; white-space: nowrap; letter-spacing: -.1px; box-shadow: 0 1px 3px rgba(0,0,0,.3); }
.login span { font: 400 16px/19px "Liberation Serif", serif; }
.scroll { width: 17px; background: #f1f1f1; display: flex; flex-direction: column; align-items: center; }
.thumb { width: 13px; height: 411px; background: #c1c1c1; }
.end { margin-top: auto; }

/* desktop taskbar */
.taskbar { height: 40px; display: flex; background: linear-gradient(90deg, #1b2028, #232a32 25%, #29303a 40%, #20262e 52%, #29303a 68%, #20252e); font-family: "Open Sans", "Noto Sans", sans-serif; color: #fff; }
.cell { width: 49px; height: 40px; display: grid; place-items: center; }
.start { width: 48px; }
.find { width: 344px; background: #f1f1f1; border: 1px solid #c4c4c4; display: flex; align-items: center; gap: 12px; padding-left: 11px; color: #333; font-size: 14.500px; letter-spacing: -.05px; }
.find svg { fill: none; stroke: #222; stroke-width: 1.300; }
.run { background: linear-gradient(#76b9ed, #76b9ed) center bottom / 40px 2px no-repeat; }
.on.run { background: linear-gradient(#76b9ed, #76b9ed) center bottom / 49px 2px no-repeat #4c525a; }
.find + .cell { width: 50px; }
.tray { margin-left: auto; width: 319px; display: flex; align-items: center; gap: 8px; border-right: 1px solid #777; margin-right: 4px; }
.two { font-size: 12px; line-height: 17px; text-align: center; letter-spacing: -.35px; width: 28px; padding-top: 0; }
.time { width: 60px; margin-left: 2px; }
.note { margin: 10px 0 0 9px; }
```
